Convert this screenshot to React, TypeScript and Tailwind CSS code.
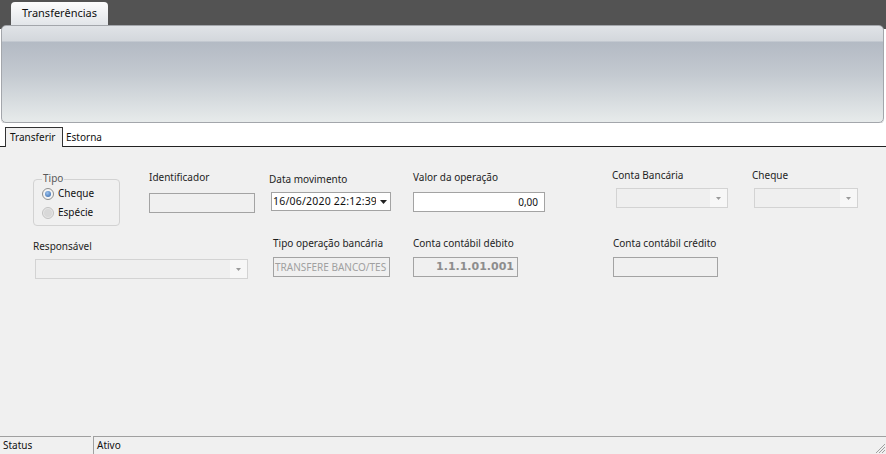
import React from "react";

const Arrow = ({ color = "#8a8a8a", w = 7, h = 4 }: { color?: string; w?: number; h?: number }) => (
  <svg width={w} height={h} viewBox={`0 0 ${w} ${h}`}>
    <polygon points={`0,0 ${w},0 ${w / 2},${h}`} fill={color} />
  </svg>
);

function Label({ children, className = "" }: { children: React.ReactNode; className?: string }) {
  return <div className={`text-[10px] leading-[13px] text-[#1e1e1e] whitespace-nowrap ${className}`}>{children}</div>;
}

function DisabledCombo({ className = "" }: { className?: string }) {
  return (
    <div className={`h-[20px] border border-[#d3d3d3] bg-[#efefef] flex ${className}`}>
      <div className="flex-1" />
      <div className="w-[17px] bg-[#f7f7f7] flex items-center justify-center">
        <Arrow color="#9a9a9a" w={5} h={3} />
      </div>
    </div>
  );
}

function DisabledBox({ className = "", children }: { className?: string; children?: React.ReactNode }) {
  return (
    <div className={`h-[20px] border border-[#a3a3a3] bg-[#f0f0f0] overflow-hidden whitespace-nowrap flex items-center ${className}`}>
      {children}
    </div>
  );
}

function Radio({ checked }: { checked?: boolean }) {
  return (
    <div
      className={`w-[12px] h-[12px] rounded-full border flex items-center justify-center ${
        checked ? "border-[#8e8f8f] bg-[#f4f4f4]" : "border-[#c2c2c2] bg-[#e6e6e6]"
      }`}
    >
      {checked ? (
        <div className="w-[6px] h-[6px] rounded-full bg-[radial-gradient(circle_at_40%_35%,#9cc3ee,#2e62a8)]" />
      ) : (
        <div className="w-[8px] h-[8px] rounded-full bg-[#d8d8d8]" />
      )}
    </div>
  );
}

export default function App() {
  return (
    <div className="w-[886px] h-[454px] flex flex-col bg-white overflow-hidden font-['Noto_Sans',sans-serif]">
      {/* top dark bar with tab */}
      <div className="h-[25px] bg-[#535353] flex items-end shrink-0">
        <div className="ml-[11px] w-[97px] h-[23px] rounded-t-[4px] bg-linear-to-b from-[#fdfdfd] to-[#e2e5e9] flex items-center justify-center text-[11px] text-[#111]">
          Transferências
        </div>
      </div>

      {/* ribbon panel */}
      <div className="h-[98px] shrink-0 bg-[linear-gradient(to_bottom,#535353_0px,#535353_4px,#ffffff_4px)] pl-[1px] pr-[2px]">
        <div className="h-full rounded-[5px] border border-[#a3a6ab] shadow-[0_1px_0_#c9cbce] bg-[linear-gradient(to_bottom,#e0e3e7_0px,#d3d7dc_15px,#b3bac4_16px,#c3c9d0_50%,#e7ebeb_100%)]" />
      </div>

      {/* tab strip */}
      <div className="h-[24px] shrink-0 bg-white flex items-end border-b border-[#222] text-[10px] text-[#111]">
        <div className="ml-[5px] w-[58px] h-[20px] mb-[-1px] border border-b-0 border-[#333] bg-[#f0f0f0] pl-[4px] flex items-center">
          Transferir
        </div>
        <div className="ml-[3px] h-[20px] mb-[-1px] flex items-center">Estorna</div>
      </div>

      {/* content */}
      <div className="flex-1 bg-[#f0f0f0] flex flex-col">
        {/* row 1 */}
        <div className="h-[80px] flex items-start">
          {/* Tipo group */}
          <div className="ml-[33px] mt-[32px] w-[87px] h-[47px] border border-[#d2d2d2] rounded-[4px] relative pt-[4px] pl-[8px]">
            <div className="absolute top-[-8px] left-[8px] bg-[#f0f0f0] px-[1px] text-[10px] leading-[13px] text-[#5a5a5a]">
              Tipo
            </div>
            <div className="h-[19px] flex items-center gap-[4px] text-[10px] text-[#111]">
              <Radio checked />
              <span>Cheque</span>
            </div>
            <div className="h-[19px] flex items-center gap-[4px] text-[10px] text-[#111]">
              <Radio />
              <span>Espécie</span>
            </div>
          </div>

          {/* Identificador */}
          <div className="ml-[29px] mt-[24px] w-[106px] flex flex-col">
            <Label>Identificador</Label>
            <DisabledBox className="mt-[9px] w-[106px]" />
          </div>

          {/* Data movimento */}
          <div className="ml-[14px] mt-[26px] w-[122px] flex flex-col">
            <Label>Data movimento</Label>
            <div className="mt-[6px] ml-[2px] w-[120px] h-[19px] border border-[#a3a3a3] bg-white flex items-center overflow-hidden">
              <div className="flex-1 overflow-hidden whitespace-nowrap text-[10.5px] tracking-[0.2px] text-[#111] pl-[1px]">16/06/2020 22:12:39</div>
              <div className="w-[14px] h-full flex items-center justify-center bg-white">
                <Arrow color="#222" w={7} h={4} />
              </div>
            </div>
          </div>

          {/* Valor */}
          <div className="ml-[22px] mt-[24px] w-[132px] flex flex-col">
            <Label>Valor da operação</Label>
            <div className="mt-[8px] w-[132px] h-[20px] border border-[#a3a3a3] bg-white flex items-center justify-end pr-[6px] text-[10px] text-[#111]">
              0,00
            </div>
          </div>

          {/* Conta Bancária */}
          <div className="ml-[67px] mt-[22px] w-[116px] flex flex-col">
            <Label>Conta Bancária</Label>
            <DisabledCombo className="mt-[6px] ml-[4px] w-[112px]" />
          </div>

          {/* Cheque */}
          <div className="ml-[24px] mt-[22px] w-[106px] flex flex-col">
            <Label>Cheque</Label>
            <DisabledCombo className="mt-[6px] ml-[2px] w-[104px]" />
          </div>
        </div>

        {/* row 2 */}
        <div className="flex items-start">
          <div className="ml-[33px] mt-[13px] w-[215px] flex flex-col">
            <Label>Responsável</Label>
            <DisabledCombo className="mt-[6px] ml-[2px] w-[213px]" />
          </div>

          <div className="ml-[25px] mt-[10px] w-[117px] flex flex-col">
            <Label>Tipo operação bancária</Label>
            <DisabledBox className="mt-[7px] w-[117px] pl-[1px] text-[10px] text-[#a0a0a0]">TRANSFERE BANCO/TES</DisabledBox>
          </div>

          <div className="ml-[23px] mt-[10px] w-[105px] flex flex-col">
            <Label>Conta contábil débito</Label>
            <DisabledBox className="mt-[7px] w-[105px] justify-end pr-[3px] font-['DejaVu_Sans',sans-serif] font-bold text-[11px] text-[#8d8d8d]">
              1.1.1.01.001
            </DisabledBox>
          </div>

          <div className="ml-[95px] mt-[10px] w-[105px] flex flex-col">
            <Label>Conta contábil crédito</Label>
            <DisabledBox className="mt-[7px] w-[105px]" />
          </div>
        </div>
      </div>

      {/* status bar */}
      <div className="h-[18px] shrink-0 bg-[#f0f0f0] flex text-[10px] text-[#111]">
        <div className="w-[91px] border-t border-[#a0a0a0] pl-[3px] flex items-center">Status</div>
        <div className="w-[2px]" />
        <div className="flex-1 border-t border-l border-[#a0a0a0] pl-[3px] flex items-center relative">
          Ativo
          <svg className="absolute right-0 bottom-0" width="12" height="12" viewBox="0 0 12 12">
            <line x1="11" y1="2" x2="2" y2="11" stroke="#a0a0a0" strokeWidth="1" />
            <line x1="11" y1="5" x2="5" y2="11" stroke="#a0a0a0" strokeWidth="1" />
            <line x1="11" y1="8" x2="8" y2="11" stroke="#a0a0a0" strokeWidth="1" />
          </svg>
        </div>
      </div>
    </div>
  );
}
